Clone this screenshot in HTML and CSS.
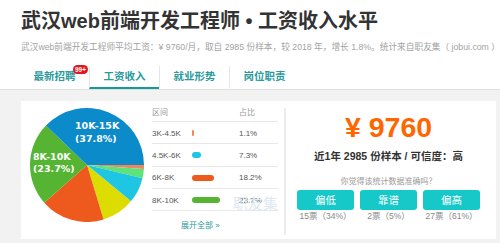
FILE: index.html
```html
<!DOCTYPE html>
<html lang="zh-CN">
<head>
    <meta charset="UTF-8">
    <meta name="viewport" content="width=device-width, initial-scale=1.0">
    <title>武汉web前端开发工程师工资收入水平</title>
    <link rel="stylesheet" href="styles.css">
</head>
<body>
    <div class="head">
        <h1 class="title">武汉web前端开发工程师 • 工资收入水平</h1>
        <p class="summary">武汉web前端开发工程师平均工资：¥ 9760/月，取自 2985 份样本，较 2018 年，增长 1.8%。统计来自职友集（ jobui.com ）</p>
        <ul class="tabs">
            <li class="tab">最新招聘<span class="badge">99+</span></li>
            <li class="tab active">工资收入</li>
            <li class="tab">就业形势</li>
            <li class="tab">岗位职责</li>
        </ul>
    </div>

    <div class="main">
        <div class="card">
            <svg class="pie" width="114" height="114" viewBox="0 0 114 114">
                <path d="M57,57 L114,57 A57,57 0 0 1 113.86,60.94 Z" fill="#f4845a"/>
                <path d="M57,57 L113.86,60.94 A57,57 0 0 1 112.47,70.13 Z" fill="#5fe27a"/>
                <path d="M57,57 L112.47,70.13 A57,57 0 0 1 100.92,93.33 Z" fill="#1fc6e4"/>
                <path d="M57,57 L100.92,93.33 A57,57 0 0 1 73.59,111.53 Z" fill="#dcdc00"/>
                <path d="M57,57 L73.59,111.53 A57,57 0 0 1 14.24,94.69 Z" fill="#ee5a1e"/>
                <path d="M57,57 L14.24,94.69 A57,57 0 0 1 15.93,17.48 Z" fill="#55b532"/>
                <path d="M57,57 L15.93,17.48 A57,57 0 0 1 114,57 Z" fill="#0c8bcb"/>
                <text class="pie-label" x="45" y="21">10K-15K</text>
                <text class="pie-label" x="45" y="33.5">(37.8%)</text>
                <text class="pie-label" x="3" y="52">8K-10K</text>
                <text class="pie-label" x="3" y="64">(23.7%)</text>
            </svg>

            <div class="ranges">
                <div class="range-row range-head">
                    <span>区间</span>
                    <span></span>
                    <span>占比</span>
                </div>
                <div class="range-row">
                    <span>3K-4.5K</span>
                    <span><i class="bar bar-orange" style="width: 2px"></i></span>
                    <span>1.1%</span>
                </div>
                <div class="range-row">
                    <span>4.5K-6K</span>
                    <span><i class="bar bar-cyan" style="width: 8.6px"></i></span>
                    <span>7.3%</span>
                </div>
                <div class="range-row">
                    <span>6K-8K</span>
                    <span><i class="bar bar-red" style="width: 21.5px"></i></span>
                    <span>18.2%</span>
                </div>
                <div class="range-row">
                    <span>8K-10K</span>
                    <span><i class="bar bar-green" style="width: 28px"></i></span>
                    <span>23.7%</span>
                </div>
                <a class="more" href="#">展开全部 »</a>
            </div>

            <div class="overview">
                <div class="price">¥ 9760</div>
                <div class="stats">近1年 2985 份样本 / 可信度：高</div>
                <div class="ask">你觉得该统计数据准确吗？</div>
                <div class="votes">
                    <div class="vote">
                        <button class="vote-btn">偏低</button>
                        <span class="vote-count">15票（34%）</span>
                    </div>
                    <div class="vote">
                        <button class="vote-btn">靠谱</button>
                        <span class="vote-count">2票（5%）</span>
                    </div>
                    <div class="vote">
                        <button class="vote-btn">偏高</button>
                        <span class="vote-count">27票（61%）</span>
                    </div>
                </div>
            </div>

            <span class="watermark">职友集</span>
        </div>
    </div>
</body>
</html>
```

FILE: styles.css
```css
body {
    margin: 0;
    font-family: "Liberation Sans", "Noto Sans CJK SC", sans-serif;
    background-color: #fff;
    color: #333;
    overflow: hidden;
}
.head {
    padding: 9px 0 0 21px;
}
.title {
    margin: 0;
    font-size: 20px;
    line-height: 24px;
    font-weight: bold;
    color: #333;
    white-space: nowrap;
}
.summary {
    margin: 8px 0 0;
    font-size: 8.7px;
    line-height: 12px;
    color: #a3a3a3;
    white-space: nowrap;
    overflow: hidden;
}
.tabs {
    display: flex;
    list-style: none;
    margin: 13px 0 0 -1px;
    padding: 0;
}
.tab {
    position: relative;
    width: 69px;
    text-align: center;
    font-size: 10.5px;
    font-weight: bold;
    line-height: 21px;
    color: #2a9a9c;
    border-bottom: 2px solid transparent;
}
.tab + .tab {
    border-left: 1px solid #e6e6e6;
}
.tab.active {
    border-bottom-color: #16999a;
}
.badge {
    position: absolute;
    left: 53px;
    top: -1px;
    padding: 0 2px;
    height: 9px;
    line-height: 9px;
    font-size: 6.5px;
    font-weight: bold;
    color: #fff;
    background-color: #e8141c;
    border-radius: 5px;
}
.main {
    background-color: #f2f2f2;
    border-top: 1px solid #dedede;
    padding: 11px 4px 4px 21px;
}
.card {
    position: relative;
    display: flex;
    background-color: #fff;
    height: 138px;
}
.pie {
    flex: none;
    margin: 7px 0 0 9px;
}
.pie-label {
    font-family: "DejaVu Sans", sans-serif;
    font-size: 9.5px;
    font-weight: bold;
    fill: #fff;
}
.ranges {
    width: 126px;
    margin-left: 8px;
    font-size: 8px;
    color: #555;
}
.range-row {
    display: grid;
    grid-template-columns: 40px 47px 1fr;
    align-items: center;
    height: 20.3px;
    padding-top: 1px;
    border-bottom: 1px solid #e8e8e8;
}
.range-head {
    height: 19px;
    padding-top: 1px;
    color: #999;
}
.bar {
    display: block;
    height: 6px;
    border-radius: 3px;
}
.bar-orange {
    background-color: #f4845a;
}
.bar-cyan {
    background-color: #1fc6e4;
}
.bar-red {
    background-color: #ee5a1e;
}
.bar-green {
    background-color: #55b532;
}
.more {
    display: block;
    margin-top: 8px;
    padding-left: 29px;
    line-height: 14px;
    color: #2a9a9c;
    text-decoration: none;
}
.overview {
    flex: 1;
    margin: 7px 5px 0 6px;
    height: 127px;
    border-left: 2px solid #ececec;
    text-align: center;
    padding-top: 3px;
    box-sizing: border-box;
}
.price {
    font-size: 28.5px;
    line-height: 32px;
    font-weight: bold;
    color: #ff6600;
}
.stats {
    margin-top: 6px;
    font-size: 10.5px;
    line-height: 14px;
    font-weight: bold;
    color: #333;
}
.ask {
    margin-top: 13px;
    font-size: 8px;
    line-height: 12px;
    color: #999;
}
.votes {
    display: flex;
    justify-content: center;
    gap: 6px;
    margin-top: 2px;
}
.vote {
    display: flex;
    flex-direction: column;
    width: 57px;
}
.vote-btn {
    height: 20px;
    padding: 0;
    border: none;
    border-radius: 3px;
    background-color: #16c8c8;
    color: #fff;
    font-family: inherit;
    font-size: 10.5px;
    line-height: 20px;
}
.vote-count {
    font-size: 8.5px;
    line-height: 12px;
    color: #888;
    white-space: nowrap;
}
.watermark {
    position: absolute;
    left: 212px;
    top: 95px;
    font-size: 15px;
    line-height: 16px;
    color: #dce8f4;
}
```
